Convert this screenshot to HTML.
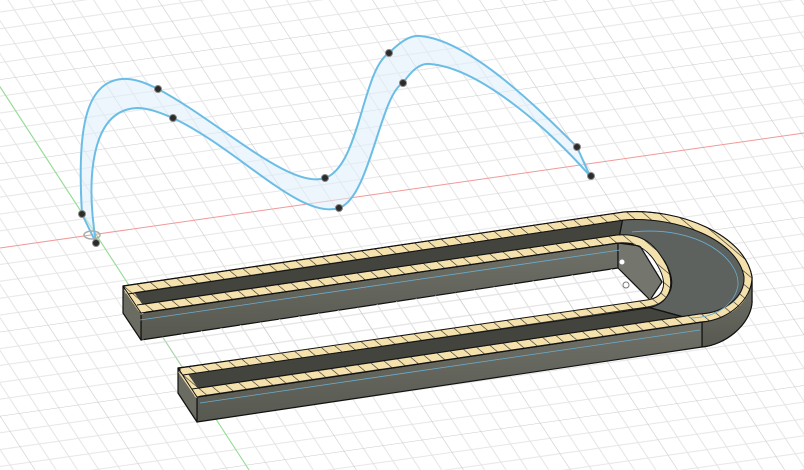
<!DOCTYPE html>
<html><head><meta charset="utf-8"><style>
html,body{margin:0;padding:0;background:#fff;width:804px;height:470px;overflow:hidden}
svg{display:block}
</style></head><body>
<svg width="804" height="470" viewBox="0 0 804 470" xmlns="http://www.w3.org/2000/svg">
<defs>
<pattern id="grid" patternUnits="userSpaceOnUse" width="100" height="100" patternTransform="matrix(0.98,-0.14,0.5,0.77,95.7,234)">
<g stroke="#e4e4e4" stroke-width="1.1" fill="none">
<path d="M0 20H100M0 40H100M0 60H100M0 80H100M20 0V100M40 0V100M60 0V100M80 0V100"/>
</g>
<g stroke="#c6c6c6" stroke-width="1.2" fill="none"><path d="M0 0H100M0 0V100"/></g>
</pattern>
<pattern id="hatch" patternUnits="userSpaceOnUse" width="10" height="10" patternTransform="rotate(-50)">
<rect width="10" height="10" fill="#f4e1ab"/>
<path d="M0 0V10" stroke="#2a2a2a" stroke-width="1.2"/>
</pattern>
<linearGradient id="side" x1="0" y1="0" x2="0" y2="1">
<stop offset="0" stop-color="#707168"/><stop offset="1" stop-color="#57584f"/>
</linearGradient>
</defs>
<rect width="804" height="470" fill="url(#grid)"/>
<line x1="0" y1="248" x2="804" y2="133" stroke="#f29a9a" stroke-width="1"/>
<line x1="0" y1="87" x2="249" y2="470" stroke="#8fe08f" stroke-width="1"/>

<path d="M82,214 C77,130 85,82 122,79 C135,78 148,84 158,89 C220,122 290,190 325,178 C360,166 362,70 389,53 C400,42 410,35 420,36 C470,40 540,110 577,147 L590,176 C550,130 480,68 430,64 C420,63 412,70 403,83 C380,95 370,198 339,208 C300,220 240,150 173,118 C163,114 150,108 137,108 C90,110 86,180 96,243 Z" fill="#dceefa" fill-opacity="0.55"/>
<g fill="none" stroke="#6cbde6" stroke-width="2">
<path d="M82,214 C77,130 85,82 122,79 C135,78 148,84 158,89 C220,122 290,190 325,178 C360,166 362,70 389,53 C400,42 410,35 420,36 C470,40 540,110 577,147"/>
<path d="M96,243 C86,180 90,110 137,108 C150,108 163,114 173,118 C240,150 300,220 339,208 C370,198 380,95 403,83 C412,70 420,63 430,64 C480,68 550,130 590,176"/>
<path d="M82,214 L96,243 M577,147 L590,176"/>
</g>
<ellipse cx="92" cy="235" rx="8" ry="4" fill="none" stroke="#aaa" stroke-width="1.5"/>
<g fill="#2b2b2b" stroke="#888" stroke-width="1">
<circle cx="82" cy="214" r="3.5"/><circle cx="96" cy="243" r="3.5"/>
<circle cx="158" cy="89" r="3.5"/><circle cx="173" cy="118" r="3.5"/>
<circle cx="325" cy="178" r="3.5"/><circle cx="339" cy="208" r="3.5"/>
<circle cx="389" cy="53" r="3.5"/><circle cx="403" cy="83" r="3.5"/>
<circle cx="577" cy="147" r="3.5"/><circle cx="591" cy="176" r="3.5"/>
</g>

<g stroke="#111" stroke-width="1.2" stroke-linejoin="round">
<path d="M618,243 L624,212 C680,208 745,235 752,277 L752,303 C750,325 725,345 702,347 L702,322 L647,307 C672,300 678,285 665,262 C655,246 640,242 618,243 Z" fill="#5d625e"/>
<path d="M702,322 C728,318 752,300 752,277 L752,303 C750,325 725,345 702,347 Z" fill="url(#side)"/>
<path d="M141,313 L618,243 L618,268 L141,340 Z" fill="url(#side)"/>
<path d="M123,286 L141,313 L141,340 L123,313 Z" fill="#6a6b61"/>
<path d="M123,286 L624,212 L618,243 L141,313 Z" fill="#42443d"/>
<path d="M141,340 L618,268 L618,243 L640,246 L662,280 L647,307 L178,368 L170,350 Z" fill="url(#grid)" stroke="none"/>
<path d="M618,243 L640,246 L662,282 L650,300 L618,268 Z" fill="#74766e"/>
<path d="M197,397 L702,322 L702,347 L197,422 Z" fill="url(#side)"/>
<path d="M178,368 L197,397 L197,422 L178,393 Z" fill="#6a6b61"/>
<path d="M178,368 L647,307 L702,322 L197,397 Z" fill="#42443d"/>
</g>
<g fill="none" stroke="url(#hatch)" stroke-width="7">
<path d="M125,290 L624,216 C680,212 742,238 748,277 C749,300 727,317 700,318 L194,393"/>
<path d="M139,309 L617,239 C640,237 652,246 664,268 C672,288 665,300 647,303 L181,372"/>
<path d="M127,288 L144,313"/>
<path d="M181,370 L199,396"/>
</g>
<g fill="none" stroke="#111" stroke-width="1">
<path d="M123,286 L624,212 C680,208 745,235 752,277 C752,300 728,320 702,322 L197,397"/>
<path d="M128,294 L624,220 C678,216 738,240 744,277 C745,297 724,313 699,314 L192,389"/>
<path d="M137,305 L617,235 C642,233 655,243 667,266 C676,288 668,304 648,308 L183,375"/>
<path d="M141,313 L618,243 C638,242 650,250 660,270 C668,287 662,298 647,300 L178,368"/>
<path d="M123,286 L141,313 M178,368 L197,397 M702,322 L702,347 M618,243 L618,268"/>
</g>
<g fill="none" stroke="#6aaed0" stroke-width="0.8">
<path d="M140,320 L620,250 M200,403 L700,330"/>
<path d="M632,232 C700,225 740,260 738,285 C735,305 715,318 690,318"/>
</g>
<circle cx="622" cy="262" r="3" fill="#fff" stroke="#777"/>
<circle cx="626" cy="285" r="3" fill="#fff" stroke="#777"/>
</svg>
</body></html>
